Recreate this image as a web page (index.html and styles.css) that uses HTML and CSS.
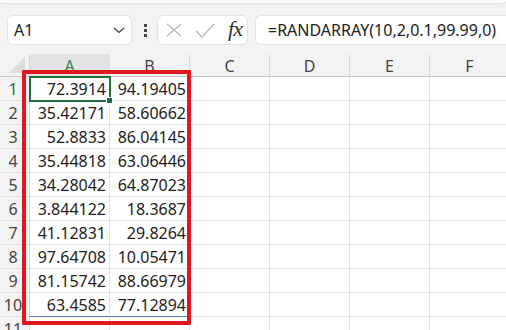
FILE: index.html
```html
<!DOCTYPE html>
<html lang="en">

<head>
    <meta charset="UTF-8">
    <title>RANDARRAY</title>
    <link rel="stylesheet" href="styles.css">
</head>

<body>
    <div class="ribbon-edge"></div>

    <div class="formula-row">
        <div class="name-box">
            <span>A1</span>
            <svg class="chevron" width="12" height="7" viewBox="0 0 12 7">
                <path d="M1 1 L6 5.5 L11 1" fill="none" stroke="#444" stroke-width="1.3" />
            </svg>
        </div>
        <div class="grip"><i></i><i></i><i></i></div>
        <div class="fx-box">
            <svg width="16" height="14" viewBox="0 0 16 14">
                <path d="M1 1 L15 13 M15 1 L1 13" stroke="#b8b8b8" stroke-width="1.3" />
            </svg>
            <svg width="20" height="15" viewBox="0 0 20 15">
                <path d="M1 8 L7 14 L19 1" fill="none" stroke="#b8b8b8" stroke-width="1.3" />
            </svg>
            <span class="fx">fx</span>
        </div>
        <div class="formula-bar">=RANDARRAY(10,2,0.1,99.99,0)</div>
    </div>

    <div class="sheet-wrap">
        <div class="sheet">
            <div class="corner"><span class="select-all"></span></div>
            <div class="col-head active">A</div>
            <div class="col-head">B</div>
            <div class="col-head">C</div>
            <div class="col-head">D</div>
            <div class="col-head">E</div>
            <div class="col-head">F</div>

            <div class="row-head active">1</div>
            <div class="cell num current">72.3914<span class="fill-handle"></span></div>
            <div class="cell num">94.19405</div>
            <div class="cell"></div><div class="cell"></div><div class="cell"></div><div class="cell"></div>

            <div class="row-head">2</div>
            <div class="cell num">35.42171</div>
            <div class="cell num">58.60662</div>
            <div class="cell"></div><div class="cell"></div><div class="cell"></div><div class="cell"></div>

            <div class="row-head">3</div>
            <div class="cell num">52.8833</div>
            <div class="cell num">86.04145</div>
            <div class="cell"></div><div class="cell"></div><div class="cell"></div><div class="cell"></div>

            <div class="row-head">4</div>
            <div class="cell num">35.44818</div>
            <div class="cell num">63.06446</div>
            <div class="cell"></div><div class="cell"></div><div class="cell"></div><div class="cell"></div>

            <div class="row-head">5</div>
            <div class="cell num">34.28042</div>
            <div class="cell num">64.87023</div>
            <div class="cell"></div><div class="cell"></div><div class="cell"></div><div class="cell"></div>

            <div class="row-head">6</div>
            <div class="cell num">3.844122</div>
            <div class="cell num">18.3687</div>
            <div class="cell"></div><div class="cell"></div><div class="cell"></div><div class="cell"></div>

            <div class="row-head">7</div>
            <div class="cell num">41.12831</div>
            <div class="cell num">29.8264</div>
            <div class="cell"></div><div class="cell"></div><div class="cell"></div><div class="cell"></div>

            <div class="row-head">8</div>
            <div class="cell num">97.64708</div>
            <div class="cell num">10.05471</div>
            <div class="cell"></div><div class="cell"></div><div class="cell"></div><div class="cell"></div>

            <div class="row-head">9</div>
            <div class="cell num">81.15742</div>
            <div class="cell num">88.66979</div>
            <div class="cell"></div><div class="cell"></div><div class="cell"></div><div class="cell"></div>

            <div class="row-head">10</div>
            <div class="cell num spill-end">63.4585</div>
            <div class="cell num spill-end">77.12894</div>
            <div class="cell"></div><div class="cell"></div><div class="cell"></div><div class="cell"></div>

            <div class="row-head">11</div>
            <div class="cell"></div><div class="cell"></div><div class="cell"></div>
            <div class="cell"></div><div class="cell"></div><div class="cell"></div>
        </div>

        <!-- red annotation box around the spilled range -->
        <div class="callout"></div>
    </div>
</body>

</html>
```

FILE: styles.css
```css
body {
    margin: 0;
    width: 506px;
    height: 330px;
    overflow: hidden;
    background-color: #f3f3f3;
    font-family: "Noto Sans", "Open Sans", sans-serif;
    color: #222;
}

.ribbon-edge {
    height: 3px;
    background: #fff;
    border-radius: 0 0 8px 8px;
    box-shadow: 0 1px 1px rgba(0, 0, 0, 0.08);
}

.formula-row {
    display: flex;
    align-items: center;
    height: 30px;
    margin-top: 12px;
    padding-left: 7px;
}

.name-box,
.fx-box,
.formula-bar {
    height: 30px;
    box-sizing: border-box;
    background: #fff;
    border: 1px solid #e3e3e3;
    border-radius: 6px;
    display: flex;
    align-items: center;
}

.name-box {
    width: 125px;
    padding: 0 6px 0 6px;
    justify-content: space-between;
    font-size: 16px;
}

.grip {
    display: flex;
    flex-direction: column;
    gap: 2px;
    margin: 0 10px 0 12px;
}

.grip i {
    width: 3px;
    height: 3px;
    background: #444;
}

.fx-box {
    width: 91px;
    margin-right: 7px;
    padding: 0 5px 0 8px;
    justify-content: space-between;
}

.fx {
    font-family: "Liberation Serif", serif;
    font-style: italic;
    font-size: 22px;
    color: #333;
    letter-spacing: -1px;
    margin-top: -3px;
}

.formula-bar {
    flex: 1;
    border-right: none;
    border-radius: 6px 0 0 6px;
    padding-left: 12px;
    font-size: 16px;
    white-space: nowrap;
}

.sheet-wrap {
    position: relative;
    margin-top: 9px;
}

.sheet {
    display: grid;
    grid-template-columns: 30px repeat(6, 80px);
    grid-auto-rows: 24px;
    grid-template-rows: 23px;
    font-size: 16px;
}

.corner,
.col-head,
.row-head {
    box-sizing: border-box;
    background: #f3f3f3;
    color: #444;
    display: flex;
    align-items: center;
    justify-content: center;
}

.corner {
    position: relative;
    border-right: 1px solid #d4d4d4;
    border-bottom: 1px solid #c8c8c8;
}

.select-all {
    position: absolute;
    right: 4px;
    bottom: 3px;
    width: 0;
    height: 0;
    border-left: 16px solid transparent;
    border-bottom: 16px solid #dcdcdc;
}

.col-head {
    border-right: 1px solid #dadada;
    border-bottom: 1px solid #c8c8c8;
    padding-top: 2px;
}

.col-head.active {
    background: #e3e3e3;
    color: #3f7a57;
}

.row-head {
    border-right: 1px solid #d4d4d4;
    border-bottom: 1px solid #e1e1e1;
    padding-right: 3px;
}

.row-head.active {
    color: #217346;
}

.cell {
    position: relative;
    box-sizing: border-box;
    background: #fff;
    border-right: 1px solid #e1e1e1;
    border-bottom: 1px solid #e1e1e1;
}

.num {
    display: flex;
    align-items: center;
    justify-content: flex-end;
    padding-right: 3px;
}

.cell.current {
    outline: 2px solid #1e6c41;
    outline-offset: -1px;
    z-index: 1;
}

.fill-handle {
    position: absolute;
    right: -4px;
    bottom: -4px;
    width: 5px;
    height: 5px;
    background: #1e6c41;
    border: 1px solid #fff;
}

.spill-end {
    border-bottom-color: #4f7fb8;
}

.callout {
    position: absolute;
    left: 22px;
    top: 16px;
    width: 169px;
    height: 255px;
    box-sizing: border-box;
    border: 4px solid #e1161f;
    border-radius: 1px;
    z-index: 2;
}
```
